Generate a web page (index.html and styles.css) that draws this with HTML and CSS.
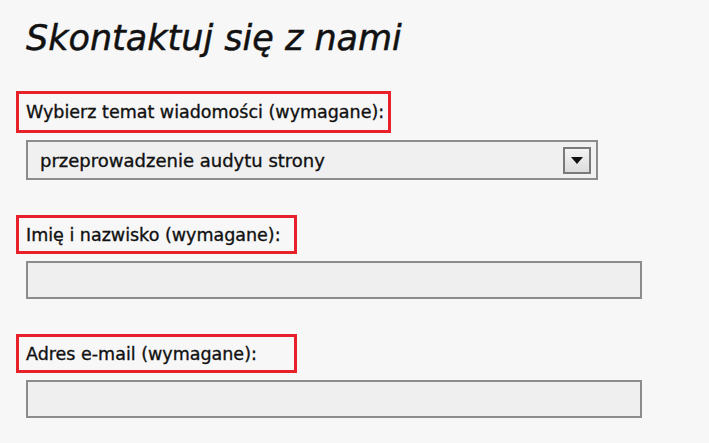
FILE: index.html
```html
<!DOCTYPE html>
<html>
<head>
    <meta charset="utf-8">
    <title>Kontakt</title>
    <link rel="stylesheet" href="styles.css">
</head>
<body>
    <div class="page">
        <h1 class="title">Skontaktuj się z nami</h1>

        <form class="contact-form">
            <div class="field">
                <label class="field-label field-label-wide" for="topic">Wybierz temat wiadomości (wymagane):</label>
                <div class="select-box" id="topic">
                    <span class="select-value">przeprowadzenie audytu strony</span>
                    <span class="select-arrow">
                        <svg width="12" height="7" viewBox="0 0 12 7"><path d="M0 0 H12 L6 7 Z" fill="#111"/></svg>
                    </span>
                </div>
            </div>

            <div class="field">
                <label class="field-label" for="name">Imię i nazwisko (wymagane):</label>
                <input class="text-input" type="text" id="name">
            </div>

            <div class="field">
                <label class="field-label" for="email">Adres e-mail (wymagane):</label>
                <input class="text-input" type="text" id="email">
            </div>
        </form>
    </div>
</body>
</html>
```

FILE: styles.css
```css
body { margin: 0; background: #f7f7f7; color: #111; font-family: "DejaVu Sans", Verdana, sans-serif; }
.page { padding: 12px 0 0 16px; }
.title { margin: 0 0 27px 10px; font-size: 35px; font-weight: normal; font-style: italic; line-height: 52px; -webkit-text-stroke: 0.5px #111; }
.contact-form { display: flex; flex-direction: column; gap: 35px; }
.field { display: flex; flex-direction: column; align-items: flex-start; gap: 7px; }
.field-label { display: inline-block; box-sizing: border-box; min-width: 281px; height: 39px; border: 3px solid #e8202a; padding: 0 4px 0 7px; line-height: 35px; font-size: 17.5px; -webkit-text-stroke: 0.35px #111; }
.field-label-wide { height: 42px; line-height: 37px; }
.select-box { margin-left: 10px; width: 568px; height: 36px; border: 2px solid #8c8c8c; background: #f0f0f0; display: flex; align-items: center; justify-content: space-between; box-sizing: content-box; }
.select-value { padding-left: 12px; font-size: 18px; -webkit-text-stroke: 0.35px #111; }
.select-arrow { width: 24px; height: 23px; margin-right: 5px; border: 2px solid #7a7a7a; background: linear-gradient(#f4f4f4, #dcdcdc); display: flex; align-items: center; justify-content: center; }
.text-input { margin: 0 0 0 10px; width: 612px; height: 34px; padding: 0; border: 2px solid #8c8c8c; background: #efefef; box-sizing: content-box; }
```
